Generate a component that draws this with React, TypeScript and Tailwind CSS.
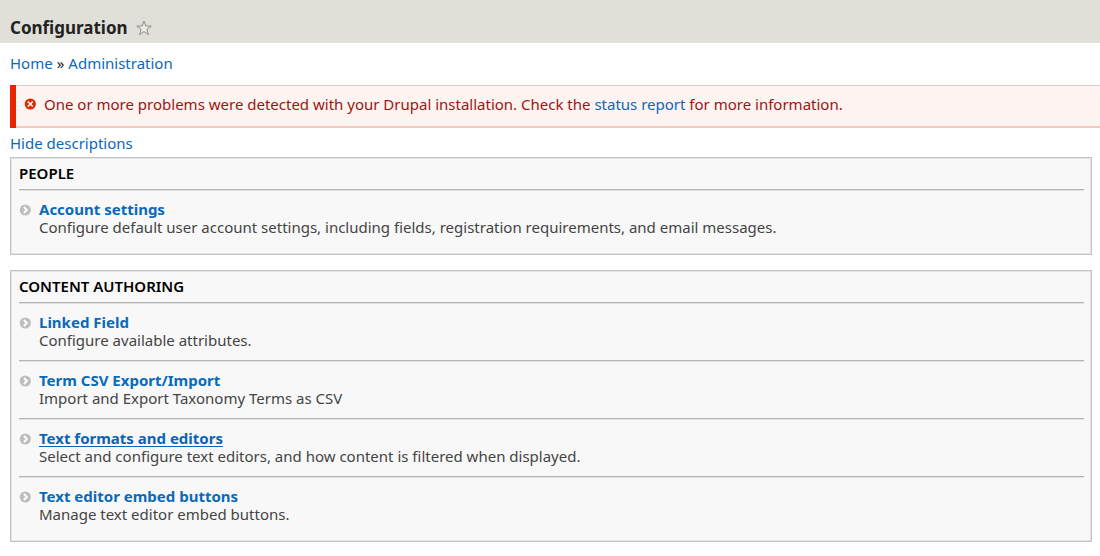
import React from "react";

type Item = { title: string; description: string; active?: boolean };
type Section = { heading: string; items: Item[] };

const sections: Section[] = [
  {
    heading: "PEOPLE",
    items: [
      {
        title: "Account settings",
        description:
          "Configure default user account settings, including fields, registration requirements, and email messages.",
      },
    ],
  },
  {
    heading: "CONTENT AUTHORING",
    items: [
      { title: "Linked Field", description: "Configure available attributes." },
      { title: "Term CSV Export/Import", description: "Import and Export Taxonomy Terms as CSV" },
      {
        title: "Text formats and editors",
        description: "Select and configure text editors, and how content is filtered when displayed.",
        active: true,
      },
      { title: "Text editor embed buttons", description: "Manage text editor embed buttons." },
    ],
  },
];

function StarIcon() {
  return (
    <svg className="size-4" viewBox="0 0 16 16" fill="#e9e9e4" stroke="#85857b" strokeWidth="0.9" aria-hidden="true">
      <path d="M8 1 L9.8 6 L15.2 6.1 L10.9 9.4 L12.5 14.7 L8 11.6 L3.5 14.7 L5.1 9.4 L0.8 6.1 L6.2 6 Z" />
    </svg>
  );
}

function ErrorIcon() {
  return (
    <svg className="size-3 shrink-0" viewBox="0 0 12 12" aria-hidden="true">
      <circle cx="6.3" cy="6" r="5.6" fill="#e32700" />
      <path d="M3.8 3.5 L8.8 8.5 M8.8 3.5 L3.8 8.5" stroke="#fff" strokeWidth="1.7" />
    </svg>
  );
}

function ChevronIcon() {
  return (
    <svg className="mt-1 size-3 shrink-0" viewBox="0 0 12 12" aria-hidden="true">
      <circle cx="6.3" cy="6" r="5.6" fill="#bebebe" />
      <path d="M4.9 3 L7.9 6 L4.9 9" fill="none" stroke="#fff" strokeWidth="1.9" />
    </svg>
  );
}

function Panel({ heading, items }: Section) {
  return (
    <section className="border border-[#c4c4c4] bg-[#f8f8f8] pr-[7px] pb-[7px] pl-2 inset-shadow-[0_0_0_1px_#e4e4e4]">
      <h2 className="h-[31px] pt-[3px] leading-6 font-semibold text-black">{heading}</h2>
      <ul>
        {items.map((item) => (
          <li key={item.title} className="flex gap-2 border-t border-[#b4b4b4] pt-2.5 pb-[11px] inset-shadow-[0_1px_0_#e2e2e2]">
            <ChevronIcon />
            <div className="leading-[18px]">
              <h3 className="font-bold">
                <a href="#" className={item.active ? "text-[#0a65b5] underline underline-offset-2" : "text-[#0a6ab8]"}>
                  {item.title}
                </a>
              </h3>
              <p className="text-[#444]">{item.description}</p>
            </div>
          </li>
        ))}
      </ul>
    </section>
  );
}

export default function App() {
  return (
    <div className="bg-white pb-3 font-['Noto_Sans',sans-serif] text-[15px] text-[#222]">
      <header className="flex items-center gap-2 bg-[#e0e0d8] px-2.5 pt-3.5 pb-0.5">
        <h1 className="text-[17px] leading-[27px] font-bold text-[#222]">Configuration</h1>
        <button type="button" aria-label="Add to shortcuts">
          <StarIcon />
        </button>
      </header>
      <nav aria-label="Breadcrumb" className="flex gap-1 px-2.5 pt-2.5 leading-5 text-[#222]">
        <a href="#" className="text-[#0d68b8]">Home</a>
        <span>»</span>
        <a href="#" className="text-[#0d68b8]">Administration</a>
      </nav>
      <div role="alert" className="mt-3 ml-2.5 border-l-6 border-[#e62600]">
        <div className="flex items-center gap-2 border-t border-b-2 border-[#f8c8be] bg-[#fdf3f1] pt-2 pb-3 pl-2 leading-[20px] text-[#9d1510]">
          <ErrorIcon />
          <p>
            One or more problems were detected with your Drupal installation. Check the{" "}
            <a href="#" className="text-[#0d68b8]">status report</a> for more information.
          </p>
        </div>
      </div>
      <main className="pt-[5px] pr-2 pl-2.5">
        <a href="#" className="block w-fit leading-5 text-[#0d68b8]">Hide descriptions</a>
        <div className="mt-1 flex flex-col gap-[15px]">
          {sections.map((section) => (
            <Panel key={section.heading} {...section} />
          ))}
        </div>
      </main>
    </div>
  );
}
